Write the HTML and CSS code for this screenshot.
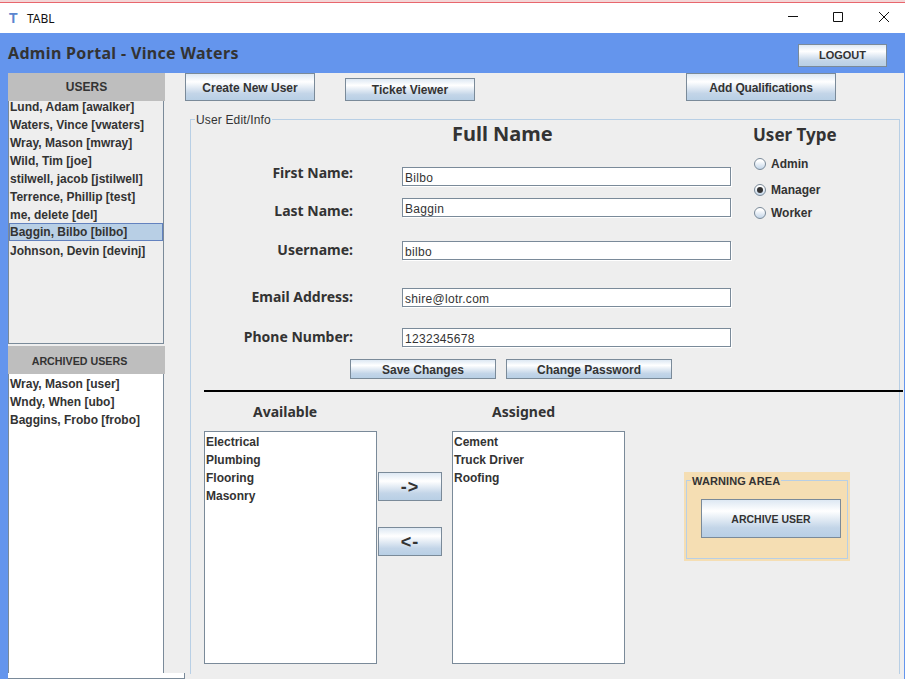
FILE: index.html
```html
<!DOCTYPE html>
<html lang="en">
<head>
  <meta charset="UTF-8">
  <title>TABL</title>
  <link rel="stylesheet" href="styles.css">
</head>
<body>

  <div class="titlebar">
    <span class="app-icon">T</span>
    <span class="app-name">TABL</span>
    <div class="window-controls">
      <svg width="12" height="12" viewBox="0 0 12 12"><path d="M1 5.5H11" stroke="#111" fill="none"/></svg>
      <svg width="12" height="12" viewBox="0 0 12 12"><path d="M1.5 1.5H10.5V10.5H1.5Z" stroke="#111" fill="none"/></svg>
      <svg width="12" height="12" viewBox="0 0 12 12"><path d="M2 1L12 11M12 1L2 11" stroke="#111" fill="none"/></svg>
    </div>
  </div>

  <div class="header">
    <h1>Admin Portal - Vince Waters</h1>
    <button class="btn logout">LOGOUT</button>
  </div>

  <div class="content">
    <div class="sidebar">
      <div class="side-head">USERS</div>
      <ul class="user-list users">
        <li>Lund, Adam [awalker]</li>
        <li>Waters, Vince [vwaters]</li>
        <li>Wray, Mason [mwray]</li>
        <li>Wild, Tim [joe]</li>
        <li>stilwell, jacob [jstilwell]</li>
        <li>Terrence, Phillip [test]</li>
        <li>me, delete [del]</li>
        <li class="selected">Baggin, Bilbo [bilbo]</li>
        <li>Johnson, Devin [devinj]</li>
      </ul>
      <div class="side-head archived-head">ARCHIVED USERS</div>
      <ul class="user-list archived">
        <li>Wray, Mason [user]</li>
        <li>Wndy, When [ubo]</li>
        <li>Baggins, Frobo [frobo]</li>
      </ul>
      <div class="archived-foot"></div>
    </div>

    <div class="main">
      <div class="toolbar">
        <button class="btn create">Create New User</button>
        <button class="btn tickets">Ticket Viewer</button>
        <button class="btn qualifications">Add Qualifications</button>
      </div>

      <fieldset class="edit-panel">
        <legend>User Edit/Info</legend>

        <div class="top-section">
          <div class="details">
            <h2>Full Name</h2>
            <div class="form-grid">
              <label class="shift-up">First Name:</label>
              <input type="text" value="Bilbo">
              <label class="shift-down">Last Name:</label>
              <input type="text" value="Baggin">
              <label>Username:</label>
              <input type="text" value="bilbo">
              <label>Email Address:</label>
              <input type="text" value="shire@lotr.com">
              <label>Phone Number:</label>
              <input type="text" value="1232345678">
            </div>
          </div>

          <div class="user-type">
            <h3>User Type</h3>
            <div class="radio first"><span class="dot"></span>Admin</div>
            <div class="radio second"><span class="dot checked"></span>Manager</div>
            <div class="radio third"><span class="dot"></span>Worker</div>
          </div>
        </div>

        <div class="form-actions">
          <button class="btn save">Save Changes</button>
          <button class="btn password">Change Password</button>
        </div>

        <hr class="divider">

        <div class="assign">
          <div class="assign-col">
            <div class="assign-title available">Available</div>
            <ul class="qual-list">
              <li>Electrical</li>
              <li>Plumbing</li>
              <li>Flooring</li>
              <li>Masonry</li>
            </ul>
          </div>

          <div class="movers">
            <button class="btn arrow">-&gt;</button>
            <button class="btn arrow">&lt;-</button>
          </div>

          <div class="assign-col">
            <div class="assign-title assigned">Assigned</div>
            <ul class="qual-list">
              <li>Cement</li>
              <li>Truck Driver</li>
              <li>Roofing</li>
            </ul>
          </div>

          <div class="warning">
            <fieldset>
              <legend>WARNING AREA</legend>
              <button class="btn archive">ARCHIVE USER</button>
            </fieldset>
          </div>
        </div>
      </fieldset>
    </div>
  </div>

</body>
</html>
```

FILE: styles.css
```css
* {
  box-sizing: border-box;
}

html, body {
  margin: 0;
  height: 679px;
  overflow: hidden;
}

body {
  background: #eeeeee;
  color: #333;
  font-family: "Liberation Sans", Arial, sans-serif;
  font-size: 12px;
}

/* window chrome */
.titlebar {
  height: 33px;
  padding-top: 3px;
  display: flex;
  align-items: center;
  background: linear-gradient(#f3d6d7 0, #f3d6d7 2px, #e8666d 2px, #e8666d 3px, #fff 3px);
}

.app-icon {
  margin-left: 9px;
  width: 18px;
  color: #5b86cf;
  font-family: "Liberation Sans", sans-serif;
  font-weight: bold;
  font-size: 14px;
}

.app-name {
  color: #111;
  font-family: "Noto Sans", sans-serif;
  font-size: 12px;
}

.window-controls {
  margin-left: auto;
  display: flex;
  gap: 33px;
  padding-right: 16px;
  margin-top: -2px;
}

.header {
  height: 40px;
  display: flex;
  align-items: center;
  justify-content: space-between;
  padding: 0 18px 0 8px;
  background: #6495ed;
}

.header h1 {
  margin: 0;
  font-family: "Noto Sans", sans-serif;
  font-size: 16px;
  font-weight: bold;
  letter-spacing: 0.33px;
}

.btn {
  padding: 0;
  border: 1px solid #7a8a99;
  border-radius: 0;
  background: linear-gradient(#dde8f3 0, #ffffff 30%, #c3d5e8 75%, #b8cfe5 100%);
  color: #333;
  font-family: "Liberation Sans", Arial, sans-serif;
  font-size: 12px;
  font-weight: bold;
}

.logout {
  width: 89px;
  height: 23px;
  margin-top: 5px;
  padding-bottom: 1px;
  font-size: 11px;
}

.content {
  display: grid;
  grid-template-columns: 177px 1fr;
  height: 606px;
  border-left: 8px solid #6495ed;
  border-right: 1px solid #6495ed;
}

/* left column */
.side-head {
  width: 157px;
  height: 28px;
  background: #bebebe;
  text-align: center;
  line-height: 29px;
  font-weight: bold;
}

.archived-head {
  margin-top: 2px;
  padding-right: 14px;
  font-size: 10.7px;
  line-height: 31px;
}

.user-list {
  margin: 0;
  padding: 0;
  list-style: none;
  width: 156px;
  border-left: 1px solid #7a8a99;
  border-right: 1px solid #7a8a99;
  font-weight: bold;
}

.user-list li {
  height: 18px;
  padding-left: 1px;
  line-height: 18px;
}

.users {
  height: 243px;
  border-bottom: 1px solid #7a8a99;
}

.users li {
  line-height: 20px;
}

/* list is scrolled a bit, so the first row shows shorter than the others */
.users li:first-child {
  height: 14px;
  line-height: 12px;
}

.users .selected {
  background: #b8cfe5;
  outline: 1px solid #6382bf;
  outline-offset: -1px;
  line-height: 18px;
}

.archived {
  height: 299px;
  padding-top: 1px;
  background: #fff;
}

.archived-foot {
  width: 177px;
  height: 6px;
  background: #fff;
  border-bottom: 1px solid #7a8a99;
  border-right: 1px solid #7a8a99;
}

/* right column */
.toolbar {
  display: flex;
  align-items: flex-end;
  height: 28px;
}

.create {
  width: 130px;
  height: 28px;
  padding-top: 1px;
}

.tickets {
  width: 130px;
  height: 23px;
  margin-left: 30px;
}

.qualifications {
  width: 150px;
  height: 28px;
  margin-left: 211px;
  padding-top: 1px;
  letter-spacing: -0.15px;
}

.edit-panel {
  margin: 10px 4px 0 5px;
  padding: 0;
  min-width: 0;
  height: 563px;
  border: 1px solid #b8cfe5;
  border-bottom: none;
}

.edit-panel legend {
  margin-left: 4px;
  padding: 2px 1px 0;
  font-size: 12px;
  line-height: 14px;
  letter-spacing: 0.15px;
}

.top-section {
  display: flex;
}

.details {
  width: 562px;
}

.details h2 {
  margin: -3px 0 0;
  padding-left: 261px;
  font-family: "Noto Sans", sans-serif;
  font-size: 20px;
  line-height: 20px;
  font-weight: bold;
}

.form-grid {
  display: grid;
  grid-template-columns: 162px 329px;
  grid-template-rows: 31px 43px 47px 40px 19px;
  column-gap: 49px;
  margin-top: 23px;
}

.form-grid label {
  height: 19px;
  margin-top: -1px;
  text-align: right;
  line-height: 19px;
  font-family: "Noto Sans", sans-serif;
  font-size: 14px;
  font-weight: bold;
}

.form-grid .shift-up {
  margin-top: -4px;
}

.form-grid .shift-down {
  margin-top: 3px;
}

.form-grid input {
  width: 329px;
  height: 19px;
  padding: 2px 0 0 2px;
  border: 1px solid #7a8a99;
  border-radius: 0;
  box-shadow: 1px 1px 0 #fff;
  background: #fff;
  color: #333;
  font-family: "Liberation Sans", Arial, sans-serif;
  font-size: 12px;
  letter-spacing: 0.3px;
}

.user-type h3 {
  margin: -2px 0 0;
  font-family: "Noto Sans", sans-serif;
  font-size: 17px;
  line-height: 20px;
  font-weight: bold;
}

.radio {
  display: flex;
  align-items: center;
  height: 14px;
  padding-left: 1px;
  font-weight: bold;
}

.radio.first {
  margin-top: 12px;
}

.radio.second {
  margin-top: 12px;
}

.radio.third {
  margin-top: 9px;
}

.dot {
  width: 12px;
  height: 12px;
  margin-right: 5px;
  border: 1px solid #7a8a99;
  border-radius: 50%;
  background: linear-gradient(#ffffff 20%, #c3d5e8);
  display: flex;
  align-items: center;
  justify-content: center;
}

.dot.checked::after {
  content: "";
  width: 6px;
  height: 6px;
  border-radius: 50%;
  background: #333;
}

.form-actions {
  display: flex;
  gap: 10px;
  margin: 12px 0 0 159px;
}

.save {
  width: 146px;
  height: 20px;
  padding-top: 1px;
}

.password {
  width: 166px;
  height: 20px;
  padding-top: 1px;
}

.divider {
  height: 2px;
  margin: 11px -4px 0 13px;
  border: none;
  background: #000;
}

.assign {
  display: flex;
  margin-left: 13px;
}

.assign-col {
  width: 173px;
}

.assign-title {
  height: 39px;
  padding-top: 12px;
  font-family: "Noto Sans", sans-serif;
  font-size: 14px;
  line-height: 16px;
  font-weight: bold;
}

.available {
  padding-left: 49px;
}

.assigned {
  padding-left: 40px;
}

.qual-list {
  margin: 0;
  padding: 1px 0 0 1px;
  list-style: none;
  height: 233px;
  background: #fff;
  border: 1px solid #7a8a99;
  font-weight: bold;
}

.qual-list li {
  height: 18px;
  line-height: 18px;
}

.movers {
  width: 75px;
  padding: 80px 0 0 1px;
  display: flex;
  flex-direction: column;
  gap: 26px;
}

.arrow {
  width: 64px;
  height: 29px;
  padding-top: 1px;
  font-size: 18px;
  letter-spacing: 1px;
}

.warning {
  width: 166px;
  height: 89px;
  margin: 80px 0 0 59px;
  padding: 1px 2px 0;
  background: #f5deb3;
}

.warning fieldset {
  margin: 0;
  padding: 0;
  height: 86px;
  border: 1px solid #b8cfe5;
}

.warning legend {
  margin-left: 4px;
  padding: 1px 1px 0;
  font-size: 11px;
  line-height: 14px;
  font-weight: bold;
  letter-spacing: 0.1px;
}

.archive {
  display: block;
  width: 140px;
  height: 39px;
  margin: 11px 0 0 14px;
  font-size: 10.5px;
}
```
